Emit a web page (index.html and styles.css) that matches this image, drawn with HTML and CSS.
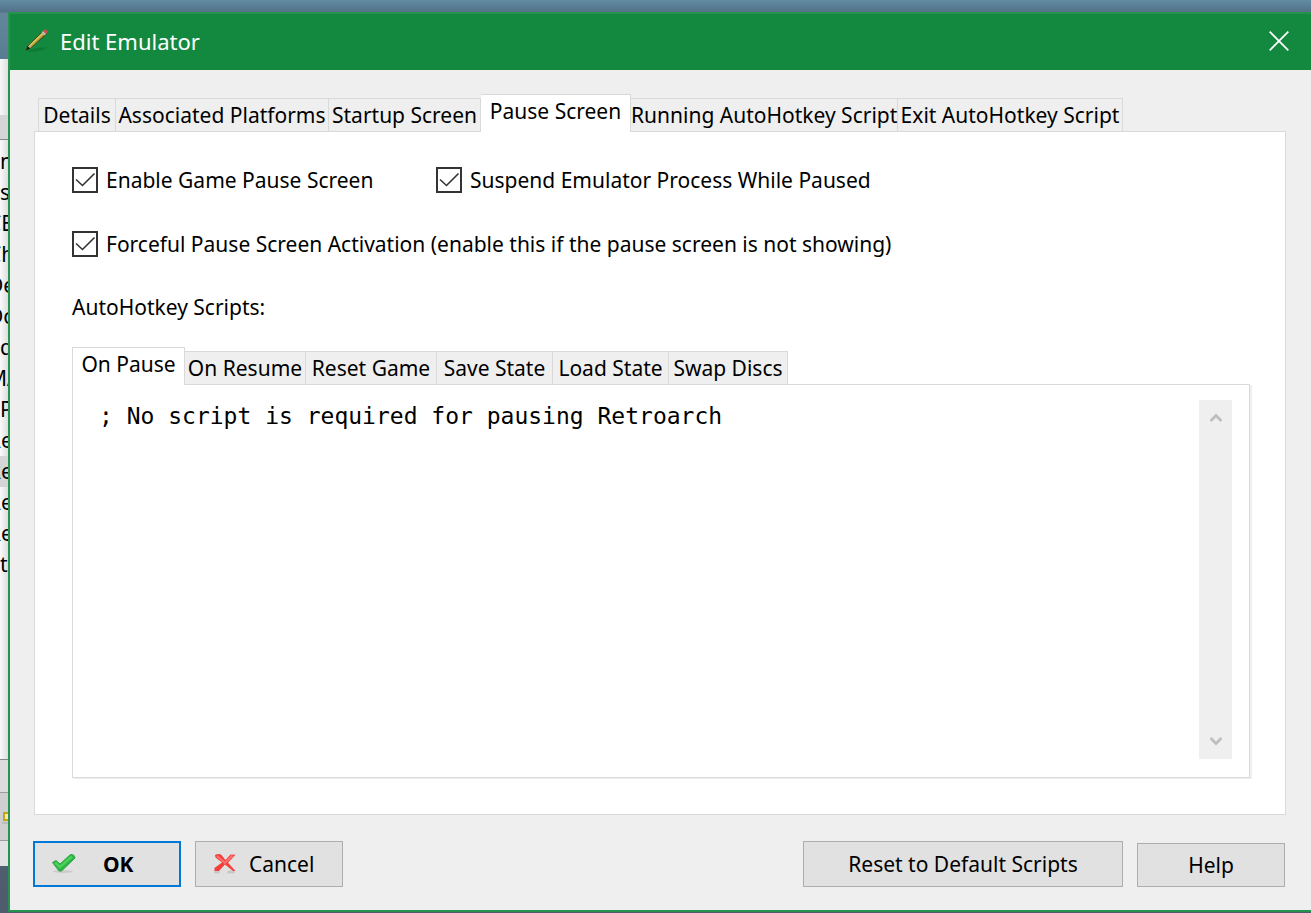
FILE: index.html
```html
<!DOCTYPE html>
<html lang="en">
<head>
<meta charset="utf-8">
<title>Edit Emulator</title>
<link rel="stylesheet" href="styles.css">
</head>
<body>
<div class="desktop">
  <aside class="back-window" aria-hidden="true">
    <div class="back-head"></div>
    <div class="back-tools"></div>
    <ul class="back-list">
      <li>n</li>
      <li>s</li>
      <li class="cut">CE</li>
      <li class="cut">Ch</li>
      <li class="cut">De</li>
      <li class="cut">Do</li>
      <li>d</li>
      <li class="cut">MA</li>
      <li>P</li>
      <li class="cut">Re</li>
      <li class="cut current">Re</li>
      <li class="cut">Re</li>
      <li class="cut">Re</li>
      <li>t</li>
    </ul>
    <div class="back-status"></div>
    <div class="back-button">
      <svg width="8" height="16" viewBox="0 0 8 16"><path d="M8 4H4v7h4" fill="#f6ecb0" stroke="#c9a21c" stroke-width="2"/><path d="M2 14h6" stroke="#bcbcbc" stroke-width="2"/></svg>
    </div>
    <div class="back-foot"></div>
  </aside>

  <main class="dialog">
    <header class="titlebar">
      <svg class="pencil" width="28" height="28" viewBox="0 0 28 28">
        <path d="M5 24.500q12 1 19-4l-7 0-10 2z" fill="#0b6e2f" opacity=".6"/>
        <path d="M3 23.500l2-5L21 3l3.500 3.500L8 21z" fill="#4d3b14"/>
        <path d="M6 18.500L19.500 5.500l2.500 2L8.500 20z" fill="#b5a03a"/>
        <path d="M7 18.500L19.500 6.500" stroke="#dccb62" stroke-width="1.500"/>
        <path d="M3 23.500l1.500-4.500 2.500 2.500z" fill="#1c2012"/>
        <path d="M5 19.500l1.500-1.500 2 2-1.500 1z" fill="#c9b98c"/>
        <path d="M18.500 5.500l2-2 3 3-2 2z" fill="#b4c0b2"/>
        <path d="M20 4l1.500-1.500q3-.5 3.500 2.500L23 7z" fill="#c4504a"/>
      </svg>
      <h1>Edit Emulator</h1>
      <button class="close" type="button" aria-label="Close">
        <svg width="20" height="20" viewBox="0 0 20 20"><path d="M.7.700l18.600 18.600M19.300.700L.7 19.300" stroke="#fff" stroke-width="1.700"/></svg>
      </button>
    </header>

    <div class="content">
      <div class="tabs main-tabs" role="tablist">
        <button class="tab t-details" type="button" role="tab">Details</button>
        <button class="tab t-platforms" type="button" role="tab">Associated Platforms</button>
        <button class="tab t-startup" type="button" role="tab">Startup Screen</button>
        <button class="tab t-pause selected" type="button" role="tab" aria-selected="true">Pause Screen</button>
        <button class="tab t-running" type="button" role="tab">Running AutoHotkey Script</button>
        <button class="tab t-exit" type="button" role="tab">Exit AutoHotkey Script</button>
      </div>

      <section class="panel">
        <div class="checks">
          <label class="check first"><input type="checkbox" checked><span>Enable Game Pause Screen</span></label>
          <label class="check"><input type="checkbox" checked><span>Suspend Emulator Process While Paused</span></label>
        </div>
        <div class="checks">
          <label class="check"><input type="checkbox" checked><span>Forceful Pause Screen Activation (enable this if the pause screen is not showing)</span></label>
        </div>
        <label class="caption" for="script">AutoHotkey Scripts:</label>

        <div class="tabs" role="tablist">
          <button class="tab s-pause selected" type="button" role="tab" aria-selected="true">On Pause</button>
          <button class="tab s-resume" type="button" role="tab">On Resume</button>
          <button class="tab s-reset" type="button" role="tab">Reset Game</button>
          <button class="tab s-state" type="button" role="tab">Save State</button>
          <button class="tab s-state" type="button" role="tab">Load State</button>
          <button class="tab s-swap" type="button" role="tab">Swap Discs</button>
        </div>
        <div class="editor">
          <textarea id="script" spellcheck="false">; No script is required for pausing Retroarch</textarea>
          <div class="scroll">
            <button type="button" aria-label="Scroll up"><svg width="12" height="10" viewBox="0 0 12 10"><path d="M.5 8L6 2.500 11.500 8" fill="none" stroke="#bfbfbf" stroke-width="3"/></svg></button>
            <button type="button" aria-label="Scroll down"><svg width="12" height="10" viewBox="0 0 12 10"><path d="M.5 2L6 7.500 11.500 2" fill="none" stroke="#bfbfbf" stroke-width="3"/></svg></button>
          </div>
        </div>
      </section>

      <footer class="actions">
        <button class="btn ok" type="button">
          <svg width="26" height="22" viewBox="0 0 26 22">
            <ellipse cx="12" cy="18.500" rx="10" ry="1.500" fill="#cbcbcb"/>
            <path d="M1.500 9.500L5 7.500l4 3.500L19.500 1.500q4-.5 4.500 3.500L10.500 18 8 18z" fill="#2bb542" stroke="#35a548" stroke-linejoin="round"/>
            <path d="M4 9.500l5 4.500L21 3.500" fill="none" stroke="#4ad25c" stroke-width="2.500"/>
          </svg>
          <span>OK</span>
        </button>
        <button class="btn cancel" type="button">
          <svg width="24" height="22" viewBox="0 0 24 22">
            <ellipse cx="18" cy="19" rx="4" ry="1.500" fill="#c8c8c8"/>
            <ellipse cx="4" cy="19" rx="3" ry="1.500" fill="#c8c8c8"/>
            <path d="M2 2q3-1.500 6-.5l4.500 5.500 5-5.500 5 .2-7.500 8 7.500 8.300h-2.500l-8-6.500-6 6.500H1.500v-3L9 9.500 2.500 4.500z" fill="#f2403d"/>
            <path d="M4 3l8 7 7.500-7.500" fill="none" stroke="#ff7470" stroke-width="2"/>
          </svg>
          <span>Cancel</span>
        </button>
        <button class="btn reset" type="button">Reset to Default Scripts</button>
        <button class="btn help" type="button">Help</button>
      </footer>
    </div>
  </main>
</div>
</body>
</html>
```
FILE: styles.css
```css
* {
  box-sizing: border-box;
}

body {
  margin: 0;
  color: #000;
  font: 21px/28px "Noto Sans", "Open Sans", sans-serif;
}

button {
  margin: 0;
  padding: 0;
  border: 0;
  background: none;
  color: inherit;
  font: inherit;
}

svg {
  display: block;
  flex: none;
}

.desktop {
  display: grid;
  grid-template-columns: 8px minmax(0, 1fr);
  min-height: 100vh;
  padding: 12px 0 1px;
  background: linear-gradient(#628ba2, #527288 12px, #63869a 13px, #587d93 60px, #4f5c6e);
}

/* Window partly covered by the dialog */
.back-window {
  display: flex;
  flex-direction: column;
  margin: 47px 0 46px;
  overflow: hidden;
  background: linear-gradient(90deg, #fafafa, #dedede);
}

.back-head {
  height: 56px;
  background: linear-gradient(90deg, #f8f8f8, #e0e0e0);
}

.back-tools {
  height: 25px;
  background: #d5d5d5;
  border-bottom: 1px solid #828790;
}

.back-list {
  flex: 1;
  margin: 0;
  padding: 6px 0 0;
  list-style: none;
}

.back-list li {
  height: 31px;
  line-height: 31px;
  white-space: nowrap;
}

.back-list .cut {
  text-indent: -12px;
}

.back-list .current {
  background: #d5d5d5;
}

.back-status {
  height: 33px;
  border-top: 1px solid #828790;
  background: #dcdcdc;
}

.back-button {
  display: flex;
  align-items: center;
  height: 49px;
  border: solid #9c9c9c;
  border-width: 1px 0;
  background: #cfcfcf;
}

.back-foot {
  height: 25px;
  background: #e2e2e2;
}

.dialog {
  display: flex;
  flex-direction: column;
  border: 2px solid #27914f;
  border-right: 0;
  background: #efefef;
}

.titlebar {
  display: flex;
  align-items: center;
  height: 56px;
  padding: 0 22px 2px 13px;
  background: #13893f;
  color: #fff;
}

h1 {
  flex: 1;
  margin: 0 0 0 9px;
  font: 22px/30px "Noto Sans", "Open Sans", sans-serif;
}

.content {
  flex: 1;
  display: flex;
  flex-direction: column;
  padding: 24px 25px 23px 24px;
}

.tabs {
  display: flex;
  align-items: flex-end;
  height: 38px;
  margin-bottom: -1px;
}

.main-tabs {
  padding-left: 4px;
}

.tab {
  height: 34px;
  border: 1px solid #d9d9d9;
  border-left: 0;
  background: #efefef;
  white-space: nowrap;
}

.tab:first-child {
  border-left: 1px solid #d9d9d9;
}

.tab.selected {
  z-index: 1;
  height: 38px;
  padding-bottom: 6px;
  border-bottom: 0;
  background: #fff;
}

.t-details { width: 78px; }
.t-platforms { width: 213px; }
.t-startup { width: 152px; }
.t-pause { width: 150px; }
.t-running { width: 267px; }
.t-exit { width: 225px; }
.s-pause { width: 113px; }
.s-resume { width: 121px; }
.s-reset { width: 131px; }
.s-state { width: 116px; }
.s-swap { width: 119px; }

.panel {
  flex: 1;
  display: flex;
  flex-direction: column;
  padding: 35px 35px 36px 37px;
  border: 1px solid #d9d9d9;
  background: #fff;
}

.checks {
  display: flex;
  height: 64px;
}

.check {
  display: flex;
  gap: 8px;
  height: 26px;
  align-items: center;
}

.check.first {
  width: 364px;
}

.check input {
  appearance: none;
  width: 26px;
  height: 26px;
  margin: 0;
  border: 2px solid #333;
  background: #fff;
}

.check input:checked {
  background: #fff url("data:image/svg+xml,%3Csvg xmlns='http://www.w3.org/2000/svg' viewBox='0 0 22 22'%3E%3Cpath d='M2 10.500L8.500 16.500 20.500 4.500' fill='none' stroke='%23333' stroke-width='1.600'/%3E%3C/svg%3E");
}

.caption {
  height: 52px;
  line-height: 24px;
}

.editor {
  flex: 1;
  display: flex;
  padding: 15px 17px 18px 26px;
  border: 1px solid #d9d9d9;
  box-shadow: 2px 1px 0 #efefef;
}

textarea {
  flex: 1;
  margin: 0;
  padding: 0;
  border: 0;
  outline: 0;
  resize: none;
  overflow: hidden;
  background: transparent;
  color: #000;
  font: 23px/32px "DejaVu Sans Mono", monospace;
}

.scroll {
  display: flex;
  flex-direction: column;
  justify-content: space-between;
  width: 33px;
  background: #efefef;
}

.scroll button {
  display: grid;
  place-items: center;
  height: 36px;
}

.actions {
  display: flex;
  align-items: flex-end;
  gap: 14px;
  margin: 26px 1px 0 -1px;
}

.btn {
  width: 148px;
  height: 46px;
  border: 1px solid #adadad;
  background: #e1e1e1;
  white-space: nowrap;
}

.ok,
.cancel {
  display: flex;
  align-items: center;
}

.ok {
  padding-left: 16px;
  border: 2px solid #0078d7;
  font-weight: bold;
  gap: 26px;
}

.cancel {
  padding-left: 17px;
  gap: 12px;
}

.reset {
  width: 320px;
  margin-left: auto;
}

.help {
  height: 44px;
}
```
